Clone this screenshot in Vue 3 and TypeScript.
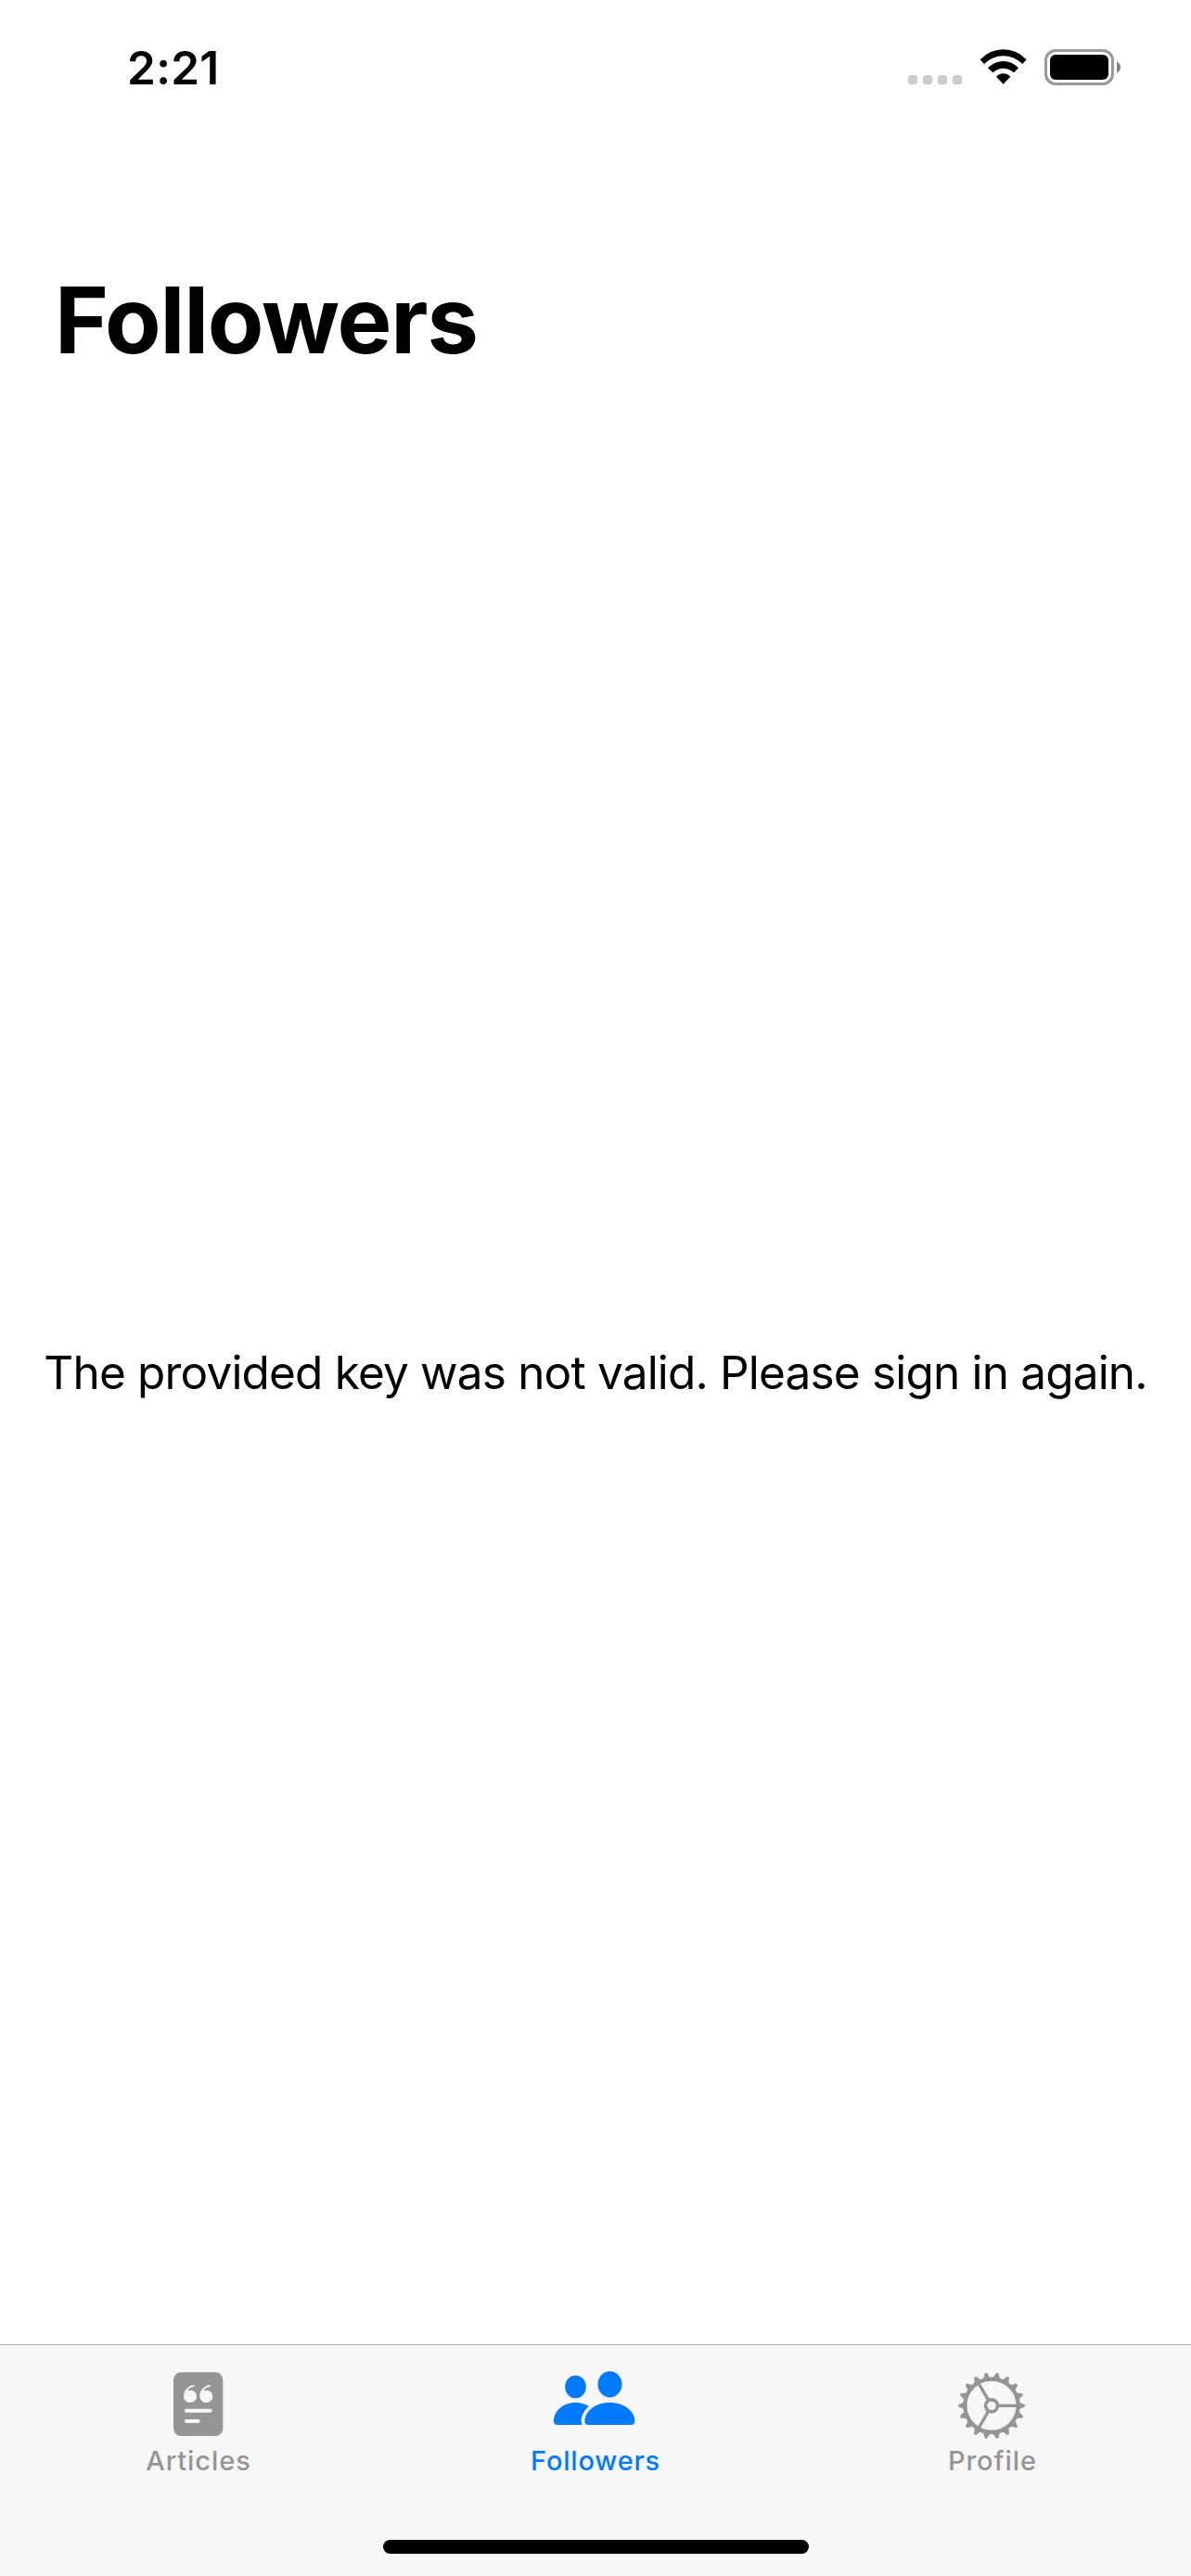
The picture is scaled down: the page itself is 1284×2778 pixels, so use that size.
<script setup lang="ts">
import { ref } from 'vue'

type TabId = 'articles' | 'followers' | 'profile'

const tabs: { id: TabId; label: string }[] = [
  { id: 'articles', label: 'Articles' },
  { id: 'followers', label: 'Followers' },
  { id: 'profile', label: 'Profile' },
]
const active = ref<TabId>('followers')
const teeth = Array.from({ length: 18 }, (_, i) => i * 20)
const spokes = [0, 120, 240]
</script>

<template>
  <div class="screen">
    <header class="status">
      <span class="time">2:21</span>
      <div class="indicators">
        <div class="dots"><i v-for="n in 4" :key="n"></i></div>
        <svg class="wifi" viewBox="288 70 153 114">
          <path d="M290 104 Q322 71 365 71 Q408 71 440 104 L427 118 Q400 92 365 92 Q330 92 303 118Z" />
          <path d="M315 131 Q337 109 365 109 Q393 109 414 131 L399 146 Q384 132 365 132 Q346 132 331 146Z" />
          <path d="M342 159 Q352 149 365 149 Q378 149 388 159 L365 183Z" />
        </svg>
        <div class="battery"><div class="charge"></div></div>
        <svg class="nub" viewBox="0 0 12 38"><path d="M0 0 Q12 7 12 19 Q12 31 0 38Z" /></svg>
      </div>
    </header>

    <h1>Followers</h1>

    <main>
      <p>The provided key was not valid. Please sign in again.</p>
    </main>

    <nav>
      <button
        v-for="tab in tabs"
        :key="tab.id"
        :class="{ active: active === tab.id }"
        @click="active = tab.id"
      >
        <svg v-if="tab.id === 'articles'" viewBox="87 120 270 234">
          <rect x="141" y="130" width="160" height="206" rx="24" />
          <g class="cutout">
            <path
              v-for="x in [0, 52]"
              :key="x"
              :transform="`translate(${x} 0)`"
              d="M206 171 C187 174 174 189 174 207 C174 220 183 228 195 228 C207 228 216 219 216 208 C216 196 207 188 196 188 C192 188 189 189 187 190 C190 182 197 178 206 177 C210 175 210 171 206 171Z"
            />
            <rect x="177" y="248" width="89" height="12" rx="6" />
            <rect x="177" y="282" width="50" height="12" rx="6" />
          </g>
        </svg>
        <svg v-else-if="tab.id === 'followers'" viewBox="111 120 270 234">
          <ellipse cx="181.500" cy="177" rx="34" ry="37" />
          <ellipse cx="292.500" cy="169" rx="39" ry="42.500" />
          <path d="M111 287 C111 257 140 228 181 228 C197 228 212 232 225 240 C208 254 200 272 200 287 C200 292 201 296 203 300 L124 300 C115 300 111 295 111 287Z" />
          <path d="M211 287 C211 260 241 228 292 228 C343 228 373 260 373 287 C373 295 369 300 360 300 L224 300 C215 300 211 295 211 287Z" />
        </svg>
        <svg v-else viewBox="75 120 270 234">
          <g transform="translate(207 238)">
            <circle class="line" r="86" stroke-width="13" />
            <circle class="line" r="19.500" stroke-width="11" />
            <path
              v-for="angle in teeth"
              :key="angle"
              :transform="`rotate(${angle})`"
              d="M88 -12 L104 -5 Q108 -4 108 0 Q108 4 104 5 L88 12Z"
            />
            <path
              v-for="angle in spokes"
              :key="`spoke-${angle}`"
              class="line"
              :transform="`rotate(${angle})`"
              d="M23 0 H84"
              stroke-width="10"
            />
          </g>
        </svg>
        <span>{{ tab.label }}</span>
      </button>
      <div class="home"></div>
    </nav>
  </div>
</template>

<style>
body {
  margin: 0;
  background: #fff;
}
</style>

<style scoped>
.screen {
  width: 1284px;
  height: 2778px;
  display: flex;
  flex-direction: column;
  background: #fff;
  color: #000;
  font-family: Inter, "Liberation Sans", sans-serif;
  overflow: hidden;
}
.status {
  height: 141px;
  flex: none;
  display: flex;
  justify-content: space-between;
  align-items: flex-start;
  padding: 0 76px 0 137px;
}
.time {
  margin-top: 43px;
  font-size: 49.5px;
  line-height: 60px;
  font-weight: 600;
  letter-spacing: 0.3px;
}
.indicators {
  display: flex;
  align-items: flex-start;
  padding-top: 53px;
}
.dots {
  display: flex;
  gap: 6px;
  margin: 28px 19px 0 0;
}
.dots i {
  width: 10px;
  height: 10px;
  border-radius: 3px;
  background: #ccc;
}
.wifi {
  width: 51px;
  height: 38px;
  margin-right: 19px;
}
.battery {
  box-sizing: border-box;
  width: 75px;
  height: 39px;
  padding: 3px;
  border: 3px solid #999;
  border-radius: 12px;
}
.charge {
  height: 27px;
  border-radius: 6px;
  background: #000;
}
.nub {
  width: 4px;
  height: 13px;
  margin: 13px 0 0 3px;
  fill: #808080;
}
h1 {
  flex: none;
  box-sizing: border-box;
  height: 300px;
  margin: 0;
  padding: 144px 0 0 59px;
  font-size: 99px;
  line-height: 120px;
  font-weight: 700;
  letter-spacing: -1.2px;
}
main {
  flex: 1;
  padding-top: 1009px;
}
p {
  margin: 0;
  text-align: center;
  white-space: nowrap;
  font-size: 49.5px;
  line-height: 60px;
  letter-spacing: -0.82px;
}
nav {
  box-sizing: border-box;
  height: 250px;
  flex: none;
  display: grid;
  grid-template-columns: repeat(3, 428px);
  grid-template-rows: 210px 15px;
  border-top: 1px solid #b2b2b2;
  background: #f7f7f7;
}
button {
  display: flex;
  flex-direction: column;
  align-items: center;
  padding: 26px 0 0;
  border: 0;
  background: none;
  color: #959595;
  font: 500 29px/36px Inter, "Liberation Sans", sans-serif;
  letter-spacing: 0.95px;
}
button.active {
  color: #007aff;
  letter-spacing: 0.8px;
}
button svg {
  width: 90px;
  height: 78px;
  fill: currentColor;
}
button span {
  margin-top: 3px;
}
.line {
  fill: none;
  stroke: currentColor;
}
.cutout {
  fill: #f7f7f7;
}
.home {
  grid-column: 1 / -1;
  justify-self: center;
  width: 459px;
  height: 15px;
  border-radius: 8px;
  background: #000;
}
</style>
